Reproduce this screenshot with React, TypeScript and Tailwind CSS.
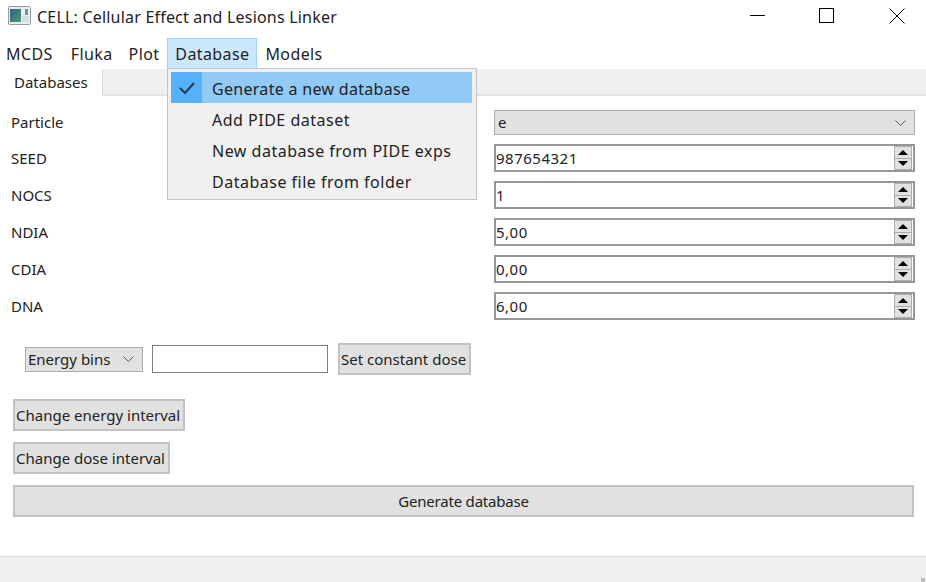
const font = { fontFamily: '"Noto Sans", sans-serif' }

function Chevron({ width = 11 }: { width?: number }) {
    return (
        <svg width={width} height="6" viewBox="0 0 11 6">
            <path d="M0.5 0.5 L5.5 5.5 L10.5 0.5" fill="none" stroke="#555" strokeWidth="1" />
        </svg>
    )
}

function Spin({ value }: { value: string }) {
    return (
        <div className="h-[28px] w-[421px] border-2 border-[#969696] bg-white flex items-center justify-between pl-[0px] pr-[1px]">
            <span className="text-[15px] text-[#222] tracking-[0.5px] pt-[1px]">{value}</span>
            <div className="flex flex-col w-[18px] h-[24px] border border-[#adadad] bg-[#e1e1e1]">
                <div className="flex-1 flex items-center justify-center border-b border-[#adadad]">
                    <svg width="10" height="5" viewBox="0 0 10 5"><path d="M0 5 L5 0 L10 5 Z" fill="#000" /></svg>
                </div>
                <div className="flex-1 flex items-center justify-center">
                    <svg width="10" height="5" viewBox="0 0 10 5"><path d="M0 0 L5 5 L10 0 Z" fill="#000" /></svg>
                </div>
            </div>
        </div>
    )
}

function Row({ label, children }: { label: string; children: React.ReactNode }) {
    return (
        <div className="flex items-center justify-between pl-[11px] pr-[11px] h-[36px] mb-[1px]">
            <span className="text-[15px] text-[#222] pt-[1px]">{label}</span>
            {children}
        </div>
    )
}

function Btn({ children, className }: { children: React.ReactNode; className?: string }) {
    return (
        <div className={`h-[32px] bg-[#e1e1e1] border-2 border-[#c2c2c2] flex items-center text-[15px] text-[#222] ${className ?? ""}`}>
            {children}
        </div>
    )
}

export default function App() {
    return (
        <div style={font} className="relative h-[582px] w-[926px] overflow-hidden bg-white flex flex-col">
            {/* Title bar */}
            <div className="h-[38px] flex items-center justify-between pl-[8px] pb-[7px]">
                <div className="flex items-center gap-[6px]">
                    <svg width="23" height="19" viewBox="0 0 23 19">
                        <defs>
                            <linearGradient id="cell-icon" x1="0" y1="0" x2="1" y2="1">
                                <stop offset="0" stopColor="#2f5f8a" />
                                <stop offset="1" stopColor="#4f9c78" />
                            </linearGradient>
                        </defs>
                        <rect x="0.5" y="0.5" width="22" height="18" rx="1" fill="#e9eeee" stroke="#9a9a9a" />
                        <rect x="2" y="3" width="11" height="13" fill="url(#cell-icon)" />
                        <rect x="14" y="10" width="7" height="6" fill="#d3dfdc" />
                        <rect x="17" y="3" width="3" height="6" fill="#7f8f96" />
                    </svg>
                    <span className="text-[16px] text-[#222] tracking-[0.2px] mt-[3px]">CELL: Cellular Effect and Lesions Linker</span>
                </div>
                <div className="flex items-center pr-[21px]">
                    <div className="w-[15px] h-[1px] bg-black mr-[54px]"></div>
                    <div className="w-[15px] h-[15px] border border-black mr-[55px]"></div>
                    <svg width="16" height="16" viewBox="0 0 16 16"><path d="M0.5 0.5 L15.5 15.5 M15.5 0.5 L0.5 15.5" stroke="#000" strokeWidth="1" /></svg>
                </div>
            </div>

            {/* Menu bar */}
            <div className="h-[31px] flex items-center text-[16px] text-[#222] tracking-[0.4px]">
                <span className="ml-[6px]">MCDS</span>
                <span className="ml-[18px]">Fluka</span>
                <span className="ml-[16px]">Plot</span>
                <span className="ml-[8px] h-[31px] w-[90px] flex items-center justify-center bg-[#cce8ff] border border-[#99d1ff]">Database</span>
                <span className="ml-[8px]">Models</span>
            </div>

            {/* Tab strip */}
            <div className="h-[27px] bg-[#f0f0f0] border-b-2 border-[#e3e3e3] flex">
                <div className="w-[103px] h-[27px] bg-white border-r border-[#d9d9d9] pl-[14px] flex items-center text-[15px] text-[#222]">Databases</div>
            </div>

            {/* Form */}
            <div className="pt-[9px]">
                <div className="flex items-center justify-between pl-[11px] pr-[11px] h-[35px]">
                    <span className="text-[15px] text-[#222]">Particle</span>
                    <div className="h-[25px] w-[421px] bg-[#e1e1e1] border border-[#adadad] flex items-center justify-between pl-[3px] pr-[8px] text-[15px] text-[#222]">
                        <span>e</span>
                        <Chevron />
                    </div>
                </div>
                <Row label="SEED"><Spin value="987654321" /></Row>
                <Row label="NOCS"><Spin value="1" /></Row>
                <Row label="NDIA"><Spin value="5,00" /></Row>
                <Row label="CDIA"><Spin value="0,00" /></Row>
                <Row label="DNA"><Spin value="6,00" /></Row>
            </div>

            {/* Dose controls */}
            <div className="flex items-center mt-[18px] ml-[25px] h-[32px]">
                <div className="h-[25px] w-[118px] bg-[#e1e1e1] border border-[#adadad] flex items-center justify-between pl-[2px] pr-[8px] text-[15px] text-[#222]">
                    <span>Energy bins</span>
                    <Chevron />
                </div>
                <div className="h-[28px] w-[176px] ml-[9px] bg-white border border-[#7a7a7a]"></div>
                <Btn className="ml-[10px] w-[133px] pl-[1px]">Set constant dose</Btn>
            </div>

            <div className="flex flex-col gap-[11px] mt-[24px] ml-[13px] mr-[12px]">
                <Btn className="w-[172px] pl-[1px]">Change energy interval</Btn>
                <Btn className="w-[157px] pl-[1px]">Change dose interval</Btn>
                <Btn className="justify-center tracking-[-0.2px]">Generate database</Btn>
            </div>

            {/* Status bar */}
            <div className="mt-auto h-[26px] bg-[#f0f0f0] border-t border-[#dcdcdc] flex justify-end items-end">
                <div className="w-[4px] h-[4px] bg-[#bdbdbd] mr-[1px]"></div>
            </div>

            {/* Open menu */}
            <div className="absolute left-[167px] top-[68px] w-[310px] h-[132px] bg-[#f0f0f0] border border-[#c4c4c4] pt-[3px] pl-[3px] pr-[4px] text-[16px] text-[#222] tracking-[0.5px]">
                <div className="h-[31px] flex items-center bg-[#91c9f7]">
                    <div className="w-[31px] h-[31px] bg-[#56b0fa] flex items-center justify-center">
                        <svg width="16" height="12" viewBox="0 0 16 12"><path d="M1 6 L6 11 L15 1" fill="none" stroke="#1e3a52" strokeWidth="2" /></svg>
                    </div>
                    <span className="ml-[10px] pt-[2px] tracking-[0.3px]">Generate a new database</span>
                </div>
                <div className="h-[31px] flex items-center pl-[41px] pt-[2px]">Add PIDE dataset</div>
                <div className="h-[31px] flex items-center pl-[41px] pt-[2px]">New database from PIDE exps</div>
                <div className="h-[31px] flex items-center pl-[41px] pt-[2px]">Database file from folder</div>
            </div>
        </div>
    )
}
